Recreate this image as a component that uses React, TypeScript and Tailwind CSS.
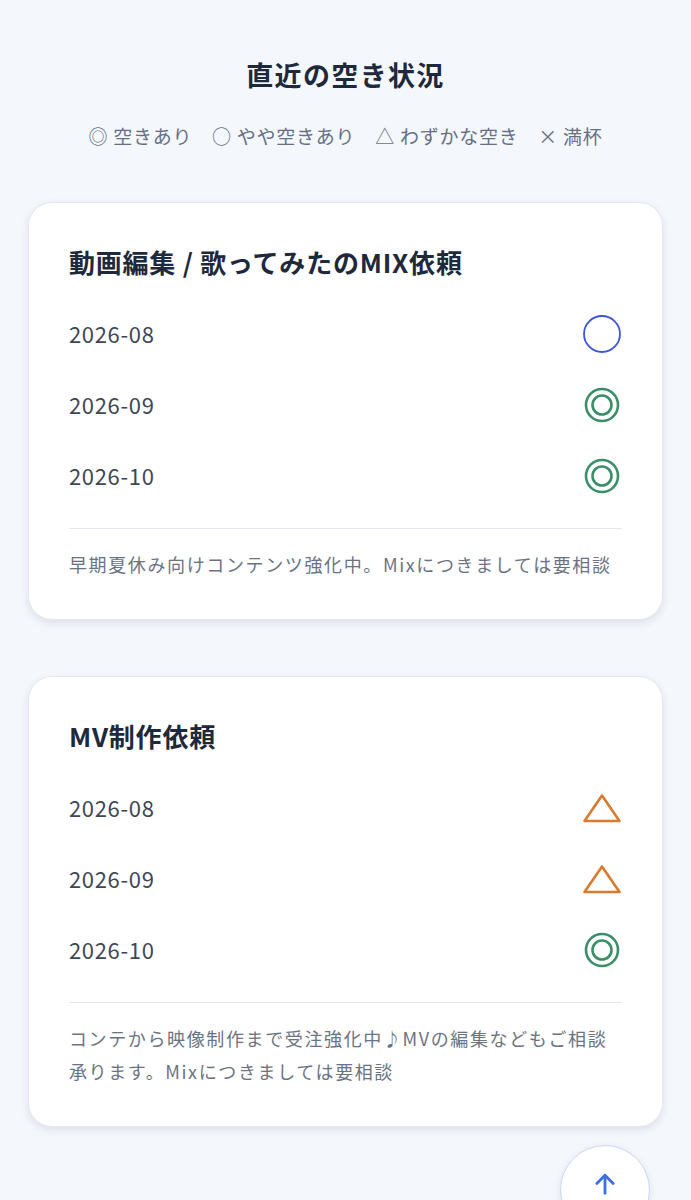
import React from "react";

type Status = "double" | "circle" | "triangle";

const font = { fontFamily: '"Noto Sans CJK JP", "Noto Sans", sans-serif' };

function StatusIcon({ s }: { s: Status }) {
  if (s === "circle")
    return (
      <svg width="40" height="40" viewBox="0 0 40 40">
        <circle cx="20" cy="20" r="18" fill="none" stroke="#3b56d4" strokeWidth="1.8" />
      </svg>
    );
  if (s === "double")
    return (
      <svg width="40" height="40" viewBox="0 0 40 40">
        <circle cx="20" cy="20" r="16" fill="none" stroke="#3b8f68" strokeWidth="2.6" />
        <circle cx="20" cy="20" r="9.5" fill="none" stroke="#3b8f68" strokeWidth="2.6" />
      </svg>
    );
  return (
    <svg width="40" height="40" viewBox="0 0 40 40">
      <path
        d="M20 7.5 L37.5 33 L2.5 33 Z"
        fill="none"
        stroke="#d97a2e"
        strokeWidth="2.6"
        strokeLinejoin="round"
      />
    </svg>
  );
}

function Card({
  title,
  rows,
  note,
}: {
  title: string;
  rows: { date: string; s: Status }[];
  note: React.ReactNode;
}) {
  return (
    <div className="bg-white rounded-[24px] border border-[#e3e8f1] shadow-[0_3px_8px_rgba(30,41,59,0.10)] px-10 pt-[41px] pb-[38px]">
      <h2 className="text-[26px] leading-[36px] font-bold text-[#1e293b] tracking-[0.03em]">{title}</h2>
      <div className="mt-[18px]">
        {rows.map((r) => (
          <div key={r.date} className="h-[71px] flex items-center justify-between">
            <span className="text-[22px] text-[#3f4756] tracking-[0.03em]">{r.date}</span>
            <StatusIcon s={r.s} />
          </div>
        ))}
      </div>
      <div className="mt-[17px] border-t border-[#e2e6ee]" />
      <p className="mt-[19px] text-[18px] leading-[33px] text-[#6b7383] tracking-[0.09em]">{note}</p>
    </div>
  );
}

export default function App() {
  return (
    <div className="min-h-[1200px] bg-[#f4f7fc]" style={font}>
      <div className="px-[28px] pt-[54px] pb-[80px]">
        <h1 className="text-center text-[27px] leading-[42px] font-bold text-[#1e293b] tracking-[0.05em]">
          直近の空き状況
        </h1>
        <p className="mt-[27px] text-center text-[19px] leading-[26px] text-[#667085] tracking-[0.04em]">
          ◎ 空きあり　○ やや空きあり　△ わずかな空き　× 満杯
        </p>
        <div className="mt-[53px] flex flex-col gap-[56px]">
          <Card
            title="動画編集 / 歌ってみたのMIX依頼"
            rows={[
              { date: "2026-08", s: "circle" },
              { date: "2026-09", s: "double" },
              { date: "2026-10", s: "double" },
            ]}
            note="早期夏休み向けコンテンツ強化中。Mixにつきましては要相談"
          />
          <Card
            title="MV制作依頼"
            rows={[
              { date: "2026-08", s: "triangle" },
              { date: "2026-09", s: "triangle" },
              { date: "2026-10", s: "double" },
            ]}
            note="コンテから映像制作まで受注強化中♪MVの編集などもご相談承ります。Mixにつきましては要相談"
          />
        </div>
      </div>
      <button className="fixed left-[560px] top-[1145px] w-[90px] h-[90px] rounded-full bg-white border border-[#c9d4ee] shadow-[0_2px_8px_rgba(30,41,59,0.08)] flex items-start justify-center pt-[24px]">
        <svg width="28" height="28" viewBox="0 0 24 24" fill="none" stroke="#3b6fe0" strokeWidth="2.4" strokeLinecap="round" strokeLinejoin="round">
          <path d="M12 20V5" />
          <path d="M5 11.5L12 4.5L19 11.5" />
        </svg>
      </button>
    </div>
  );
}
